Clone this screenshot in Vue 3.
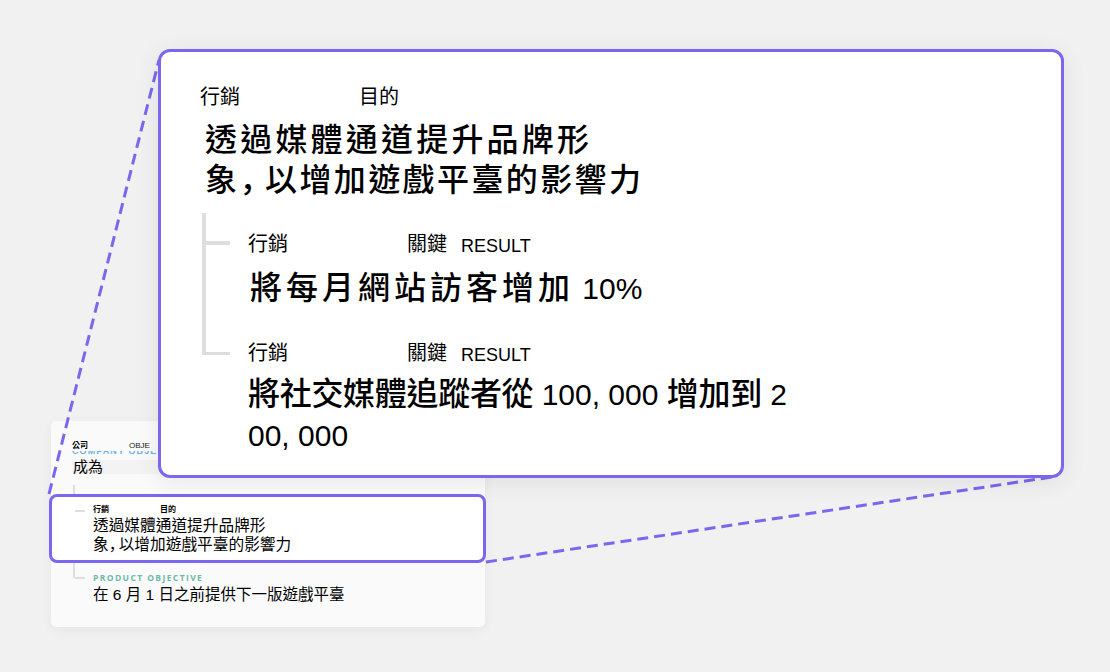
<script setup>
const keyResults = [
  { parts: [['將每月網站訪客增加', ' 10%']], wide: true },
  { parts: [['將社交媒體追蹤者從', ' 100, 000 ', '增加到', ' 2'], ['', '00, 000']], wide: false }
];
</script>

<template>
  <div class="page">
    <div class="mini-card">
      <div class="mini-labels">
        <span class="mini-gong">公司</span>
        <span class="mini-obje">OBJE</span>
      </div>
      <div class="mini-blue">COMPANY OBJECTIVE</div>
      <div class="mini-become">成為</div>
      <div class="mini-tree">
        <div class="mini-highlight">
          <i class="mini-branch first"></i>
          <div class="mini-tiny">
            <span>行銷</span>
            <span>目的</span>
          </div>
          <div class="mini-title">透過媒體通道提升品牌形<br />象<span class="comma">，</span>以增加遊戲平臺的影響力</div>
        </div>
        <div class="mini-product">
          <i class="mini-branch second"></i>
          <div class="mini-green">PRODUCT OBJECTIVE</div>
          <div class="mini-text">在 6 月 1 日之前提供下一版遊戲平臺</div>
        </div>
      </div>
    </div>

    <svg class="lines" width="1110" height="672" viewBox="0 0 1110 672">
      <path d="M49 494 L159 60" />
      <path d="M486 562 L1052 477" />
    </svg>

    <div class="big-card">
      <div class="labels">
        <span class="label-a">行銷</span>
        <span>目的</span>
      </div>
      <div class="title">透過媒體通道提升品牌形<br /><span class="second-line">象<span class="comma">，</span>以增加遊戲平臺的影響力</span></div>
      <div class="tree">
        <div v-for="(kr, i) in keyResults" :key="i" class="kr">
          <i class="branch"></i>
          <div class="labels">
            <span class="label-a">行銷</span>
            <span class="label-b">關鍵</span>
            <span class="result">RESULT</span>
          </div>
          <div class="kr-text" :class="{ wide: kr.wide }">
            <div v-for="(line, j) in kr.parts" :key="j">
              <span v-for="(part, k) in line" :key="k" :class="k % 2 === 0 ? 'cjk' : 'num'">{{ part }}</span>
            </div>
          </div>
        </div>
      </div>
    </div>
  </div>
</template>

<style>
html, body {
  margin: 0;
  background: #f1f1f1;
}
</style>

<style scoped>
.page {
  position: relative;
  width: 1110px;
  height: 672px;
  overflow: hidden;
  background: #f1f1f1;
  color: #000;
  font-family: "Liberation Sans", "Noto Sans CJK TC", sans-serif;
}
.comma {
  font-family: "Noto Sans CJK SC", sans-serif;
  line-height: 0;
}

/* small card */
.mini-card {
  position: absolute;
  left: 51px;
  top: 421px;
  isolation: isolate;
  width: 434px;
  height: 206px;
  box-sizing: border-box;
  padding: 19px 0 0 21px;
  background: #fafafa;
  border-radius: 5px;
  box-shadow: 0 3px 12px rgba(0, 0, 0, 0.05);
}
.mini-labels {
  position: relative;
  z-index: 1;
  display: flex;
  height: 11px;
  background: #fafafa;
  font-size: 8px;
  line-height: 11px;
  font-weight: 700;
}
.mini-gong {
  width: 57px;
}
.mini-obje {
  color: #222;
  font-size: 8px;
  font-weight: 400;
}
.mini-blue {
  margin-top: -4px;
  height: 9px;
  color: #6fb1e4;
  font-size: 9px;
  line-height: 9px;
  font-weight: 700;
  letter-spacing: 1.1px;
  white-space: nowrap;
}
.mini-become {
  width: 86px;
  height: 14px;
  margin-top: 4px;
  padding-left: 1px;
  background: #f3f3f3;
  font-size: 15px;
  line-height: 14px;
}
.mini-tree {
  position: relative;
  margin: 20px 0 0 -2px;
  height: 92px;
}
.mini-tree::before {
  content: "";
  position: absolute;
  left: 3px;
  top: -9px;
  width: 2px;
  height: 93px;
  background: #dedede;
}
.mini-highlight {
  position: relative;
  box-sizing: border-box;
  margin-left: -21px;
  width: 437px;
  height: 69px;
  padding: 7px 0 0 41px;
  background: #fff;
  border: 3px solid #7a67ee;
  border-radius: 8px;
}
.mini-tiny {
  display: flex;
  gap: 49px;
  height: 12px;
  font-size: 8px;
  line-height: 12px;
  font-weight: 700;
}
.mini-tiny span {
  width: 18px;
}
.mini-title {
  font-size: 15.7px;
  line-height: 19px;
  white-space: nowrap;
}
.mini-title .comma {
  letter-spacing: -5.7px;
}
.mini-branch {
  position: absolute;
  height: 1.5px;
  background: #dedede;
}
.mini-branch.first {
  left: 23px;
  top: 13px;
  width: 10px;
}
.mini-branch.second {
  left: 5px;
  top: 14px;
  width: 10px;
}
.mini-product {
  position: relative;
  padding: 9px 0 0 23px;
}
.mini-green {
  color: #6cb9a9;
  font-family: "Open Sans", sans-serif;
  font-size: 8.5px;
  line-height: 11px;
  font-weight: 700;
  letter-spacing: 1.4px;
}
.mini-text {
  margin-top: 2px;
  font-size: 15.5px;
  line-height: 19px;
  white-space: nowrap;
}

/* dashed connectors */
.lines {
  position: absolute;
  left: 0;
  top: 0;
}
.lines path {
  fill: none;
  stroke: #7a67ee;
  stroke-width: 3;
  stroke-dasharray: 11 6;
}

/* magnified card */
.big-card {
  position: absolute;
  left: 158px;
  top: 49px;
  width: 906px;
  height: 429px;
  box-sizing: border-box;
  padding: 32px 0 0 39px;
  background: #fff;
  border: 3px solid #7a67ee;
  border-radius: 12px;
  box-shadow: 0 4px 24px rgba(0, 0, 0, 0.08);
}
.labels {
  display: flex;
  align-items: flex-end;
  height: 26px;
  font-size: 20px;
  line-height: 26px;
}
.label-a {
  width: 159px;
}
.label-b {
  width: 54px;
}
.result {
  font-size: 18px;
  line-height: 22px;
}
.title {
  margin: 10px 0 0 5px;
  font-size: 32px;
  line-height: 40px;
  font-weight: 500;
  letter-spacing: 3.2px;
  white-space: nowrap;
}
.second-line {
  letter-spacing: 2.4px;
}
.title .comma {
  letter-spacing: -6.4px;
}
.tree {
  position: relative;
  margin: 13px 0 0 2px;
  padding: 18px 0 0 46px;
}
.tree::before {
  content: "";
  position: absolute;
  left: 0;
  top: 0;
  width: 4px;
  height: 141px;
  background: #dedede;
}
.kr {
  position: relative;
}
.branch {
  position: absolute;
  left: -46px;
  top: 10px;
  width: 28px;
  height: 4px;
  background: #dedede;
}
.kr + .kr {
  margin-top: 26px;
}
.kr + .kr .branch {
  top: 12px;
  height: 3px;
}
.kr-text {
  margin-top: 8px;
  line-height: 41px;
  white-space: nowrap;
}
.kr-text > div + div {
  margin-top: -5px;
}
.kr-text.wide {
  margin: 11px 0 0 2px;
}
.cjk {
  font-size: 32px;
  font-weight: 500;
  letter-spacing: -0.3px;
}
.wide .cjk {
  letter-spacing: 4px;
}
.num {
  font-size: 30px;
  white-space: pre;
}
</style>
